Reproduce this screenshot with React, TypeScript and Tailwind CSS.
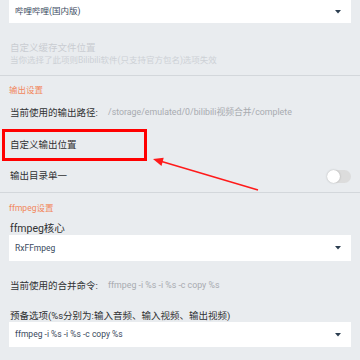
import React from "react";

const font = { fontFamily: "Roboto, 'Noto Sans CJK SC', sans-serif" };

function Caret() {
  return (
    <svg width="6" height="4" viewBox="0 0 6 4" className="shrink-0">
      <polygon points="0,0 6,0 3,3.5" fill="#2c3e50" />
    </svg>
  );
}

function Select({ text, h }: { text: string; h: string }) {
  return (
    <div className={`mx-[9px] bg-white flex items-center justify-between pl-[6px] pr-[10px] ${h}`}>
      <span className="text-[8.5px] text-[#3a4a5e] leading-none">{text}</span>
      <Caret />
    </div>
  );
}

export default function App() {
  return (
    <div className="relative w-[360px] h-[360px] overflow-hidden bg-[#e9ecef]" style={font}>
      <Select text="哔哩哔哩(国内版)" h="h-[23px]" />

      <div className="h-[52px] px-[10px] pt-[18px]">
        <div className="text-[9.5px] leading-[14px] text-[#c9cdd2]">自定义缓存文件位置</div>
        <div className="text-[8.5px] leading-[10px] text-[#cdd1d6]">当你选择了此项则Bilibili软件(只支持官方包名)选项失效</div>
      </div>
      <div className="h-px bg-[#d3d7db]" />

      <div className="h-[28px] flex items-center px-[9px] text-[8.5px] text-[#f2875c]">输出设置</div>
      <div className="h-[18px] flex items-center px-[10px]">
        <span className="text-[9.5px] text-[#303133] w-[98px]">当前使用的输出路径:</span>
        <span className="text-[8.8px] text-[#a8abb0]">/storage/emulated/0/bilibili视频合并/complete</span>
      </div>
      <div className="relative h-[46px] flex items-center px-[10px]">
        <span className="text-[9.5px] text-[#303133]">自定义输出位置</span>
        <div className="absolute left-[2px] top-[7px] w-[145px] h-[32px] border-[3px] border-[#ff0000]" />
      </div>
      <div className="h-[16px] flex items-center justify-between pl-[10px] pr-[9px]">
        <span className="text-[9.5px] text-[#303133]">输出目录单一</span>
        <div className="relative w-[24px] h-[13px] rounded-full bg-[#dcdcdc]">
          <div className="absolute left-0 top-0 w-[13px] h-[13px] rounded-full bg-white shadow-[0_0_2px_rgba(0,0,0,0.25)]" />
        </div>
      </div>
      <div className="h-[8px]" />
      <div className="h-px bg-[#d3d7db]" />

      <div className="h-[30px] flex items-center px-[9px] text-[8.5px] text-[#f2875c]">ffmpeg设置</div>
      <div className="h-[12px] flex items-center px-[10px] text-[10.5px] text-[#303133]">ffmpeg核心</div>
      <Select text="RxFFmpeg" h="h-[26px]" />

      <div className="h-[50px] flex items-center px-[10px]">
        <span className="text-[9.5px] text-[#303133] w-[98px]">当前使用的合并命令:</span>
        <span className="text-[8.8px] text-[#a8abb0]">ffmpeg -i %s -i %s -c copy %s</span>
      </div>
      <div className="h-[11px] flex items-center px-[10px] text-[9.5px] text-[#303133]">预备选项(%s分别为:输入音频、输入视频、输出视频)</div>
      <Select text="ffmpeg -i %s -i %s -c copy %s" h="h-[25px]" />

      <svg className="absolute left-0 top-0 pointer-events-none" width="360" height="360">
        <line x1="258" y1="190" x2="160" y2="161" stroke="#ff1a1a" strokeWidth="1.5" />
        <polygon points="153,159 163.7,157.8 161.5,165.9" fill="#ff1a1a" />
      </svg>
    </div>
  );
}
